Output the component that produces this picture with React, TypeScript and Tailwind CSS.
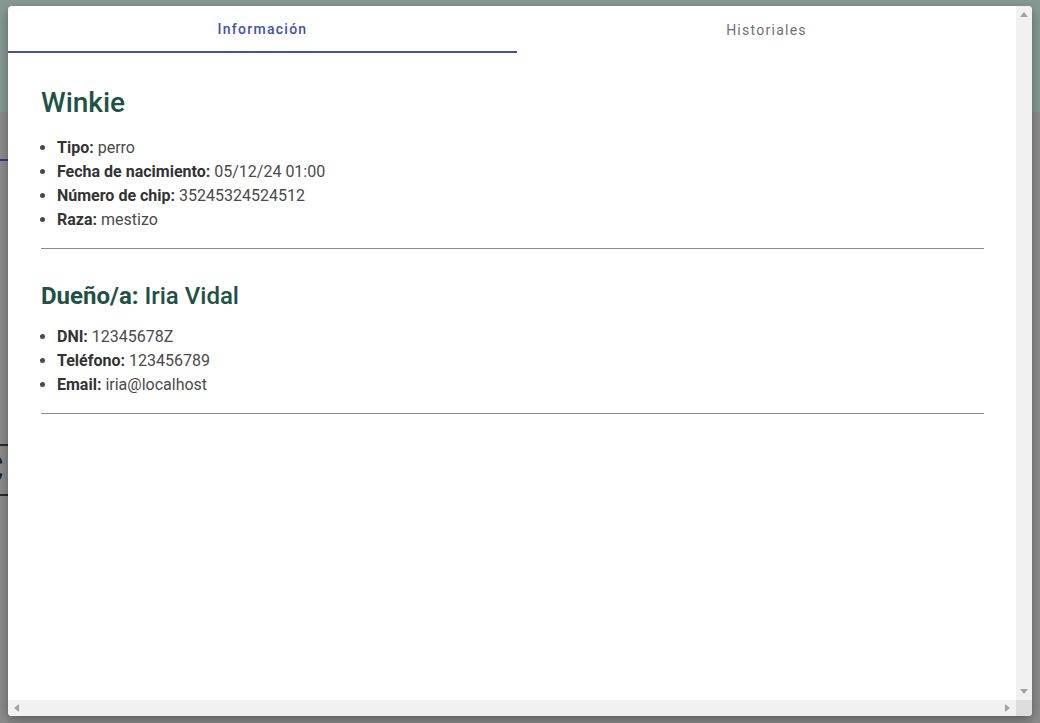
const pet = [
  { label: "Tipo:", value: "perro" },
  { label: "Fecha de nacimiento:", value: "05/12/24 01:00" },
  { label: "Número de chip:", value: "35245324524512" },
  { label: "Raza:", value: "mestizo" },
];

const owner = [
  { label: "DNI:", value: "12345678Z" },
  { label: "Teléfono:", value: "123456789" },
  { label: "Email:", value: "iria@localhost" },
];

function InfoList({ items }: { items: { label: string; value: string }[] }) {
  return (
    <ul className="list-disc pl-4 text-[16px] leading-6 text-[#4a4a4a]">
      {items.map((item) => (
        <li key={item.label}>
          <span className="font-bold text-[#333]">{item.label}</span> {item.value}
        </li>
      ))}
    </ul>
  );
}

function Arrow({ dir }: { dir: "up" | "down" | "left" | "right" }) {
  const points = {
    up: "0,5 8,5 4,0",
    down: "0,0 8,0 4,5",
    left: "5,0 5,8 0,4",
    right: "0,0 0,8 5,4",
  }[dir];
  const vertical = dir === "up" || dir === "down";
  return (
    <svg width={vertical ? 8 : 5} height={vertical ? 5 : 8} viewBox={vertical ? "0 0 8 5" : "0 0 5 8"}>
      <polygon points={points} fill="#a3a3a3" />
    </svg>
  );
}

export default function App() {
  return (
    <div
      className="relative h-[723px] w-[1040px] overflow-hidden bg-[#8c8c8c]"
      style={{ fontFamily: "Roboto, 'Liberation Sans', sans-serif" }}
    >
      {/* dimmed page behind the dialog */}
      <div className="h-[112px] bg-[#879a94]" />
      <div className="mt-[47px] h-[2px] w-[60px] bg-[#33407a]" />
      <div className="mt-[283px] h-[2px] w-[60px] bg-[#2a2a2a]" />
      <div className="-ml-[22px] h-[48px] text-[40px] leading-[48px] text-[#222]">C</div>
      <div className="h-[2px] w-[60px] bg-[#2a2a2a]" />

      {/* dialog */}
      <div className="absolute left-2 top-[6px] flex h-[710px] w-[1024px] flex-col overflow-hidden rounded bg-white shadow-[0_4px_12px_rgba(0,0,0,0.35)]">
        <div className="flex min-h-0 flex-1">
          <div className="flex-1 overflow-hidden">
            <div className="flex h-[47px] text-[14px] font-medium tracking-[0.09em]">
              <div className="flex w-[509px] shrink-0 items-center justify-center border-b-2 border-[#3f51b5] pt-[1px] text-[#3f51b5]">
                Información
              </div>
              <div className="flex flex-1 items-center justify-center pt-[1px] font-normal text-[#707070]">
                Historiales
              </div>
            </div>

            <div className="pl-[33px] pr-[32px] pt-[33px]">
              <h2 className="text-[28px] font-medium leading-[34px] text-[#1e5245]">Winkie</h2>
              <div className="mt-4">
                <InfoList items={pet} />
              </div>
              <hr className="mt-4 border-t border-[#8a8a8a]" />

              <h3 className="mt-8 text-[24px] leading-[30px] text-[#1e5245]">
                <span className="font-bold">Dueño/a:</span>{" "}
                <span className="font-medium">Iria Vidal</span>
              </h3>
              <div className="mt-[14px]">
                <InfoList items={owner} />
              </div>
              <hr className="mt-4 border-t border-[#8a8a8a]" />
            </div>
          </div>

          {/* vertical scrollbar */}
          <div className="flex w-4 shrink-0 flex-col items-center justify-between bg-[#f1f1f1] py-[6px]">
            <Arrow dir="up" />
            <Arrow dir="down" />
          </div>
        </div>

        {/* horizontal scrollbar */}
        <div className="flex h-4 shrink-0">
          <div className="flex flex-1 items-center justify-between bg-[#f1f1f1] px-[6px]">
            <Arrow dir="left" />
            <Arrow dir="right" />
          </div>
          <div className="w-4 bg-[#dcdcdc]" />
        </div>
      </div>
    </div>
  );
}
